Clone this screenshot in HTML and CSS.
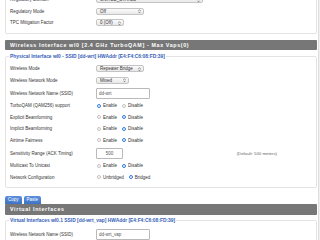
FILE: index.html
```html
<!DOCTYPE html>
<html lang="en">
<head>
    <meta charset="UTF-8">
    <title>Wireless Basic Settings</title>
    <link rel="stylesheet" href="styles.css">
</head>
<body>
    <div class="page">
        <!-- Regulatory settings (continues above the fold) -->
        <fieldset class="group first">
            <div class="row">
                <span class="label">Regulatory Domain</span>
                <span class="select wide">UNITED_STATES <svg class="arrows" viewBox="0 0 4 6"><path d="M0.6 2.4 2 0.9 3.4 2.4M0.6 3.6 2 5.1 3.4 3.6"/></svg></span>
            </div>
            <div class="row">
                <span class="label">Regulatory Mode</span>
                <span class="select" style="width:48px">Off <svg class="arrows" viewBox="0 0 4 6"><path d="M0.6 2.4 2 0.9 3.4 2.4M0.6 3.6 2 5.1 3.4 3.6"/></svg></span>
            </div>
            <div class="row">
                <span class="label">TPC Mitigation Factor</span>
                <span class="select" style="width:28px">0 (Off) <svg class="arrows" viewBox="0 0 4 6"><path d="M0.6 2.4 2 0.9 3.4 2.4M0.6 3.6 2 5.1 3.4 3.6"/></svg></span>
            </div>
        </fieldset>

        <h2 class="bar">Wireless Interface wl0 [2.4 GHz TurboQAM] - Max Vaps(0)</h2>

        <!-- Physical interface -->
        <fieldset class="group">
            <legend>Physical Interface wl0 - SSID [dd-wrt] HWAddr [E4:F4:C6:08:FD:39]</legend>
            <div class="row">
                <span class="label">Wireless Mode</span>
                <span class="select" style="width:48px">Repeater Bridge <svg class="arrows" viewBox="0 0 4 6"><path d="M0.6 2.4 2 0.9 3.4 2.4M0.6 3.6 2 5.1 3.4 3.6"/></svg></span>
            </div>
            <div class="row">
                <span class="label">Wireless Network Mode</span>
                <span class="select" style="width:33px">Mixed <svg class="arrows" viewBox="0 0 4 6"><path d="M0.6 2.4 2 0.9 3.4 2.4M0.6 3.6 2 5.1 3.4 3.6"/></svg></span>
            </div>
            <div class="row tall">
                <span class="label">Wireless Network Name (SSID)</span>
                <span class="text" style="width:54px">dd-wrt</span>
            </div>
            <div class="row">
                <span class="label">TurboQAM (QAM256) support</span>
                <span class="option"><i class="radio on"></i>Enable</span>
                <span class="option"><i class="radio"></i>Disable</span>
            </div>
            <div class="row">
                <span class="label">Explicit Beamforming</span>
                <span class="option"><i class="radio"></i>Enable</span>
                <span class="option"><i class="radio on"></i>Disable</span>
            </div>
            <div class="row">
                <span class="label">Implicit Beamforming</span>
                <span class="option"><i class="radio"></i>Enable</span>
                <span class="option"><i class="radio on"></i>Disable</span>
            </div>
            <div class="row">
                <span class="label">Airtime Fairness</span>
                <span class="option"><i class="radio"></i>Enable</span>
                <span class="option"><i class="radio on"></i>Disable</span>
            </div>
            <div class="row tall">
                <span class="label">Sensitivity Range (ACK Timing)</span>
                <span class="text num" style="width:27px">500</span>
                <span class="default">(Default: 500 meters)</span>
            </div>
            <div class="row">
                <span class="label">Multicast To Unicast</span>
                <span class="option"><i class="radio"></i>Enable</span>
                <span class="option"><i class="radio on"></i>Disable</span>
            </div>
            <div class="row">
                <span class="label">Network Configuration</span>
                <span class="option"><i class="radio"></i>Unbridged</span>
                <span class="option"><i class="radio on"></i>Bridged</span>
            </div>
        </fieldset>

        <!-- Copy / paste tabs -->
        <div class="tabs">
            <span class="tab">Copy</span>
            <span class="tab">Paste</span>
        </div>
        <h2 class="bar flat">Virtual Interfaces</h2>

        <!-- Virtual interface -->
        <fieldset class="group">
            <legend>Virtual Interfaces wl0.1 SSID [dd-wrt_vap] HWAddr [E4:F4:C6:08:FD:39]</legend>
            <div class="row tall">
                <span class="label">Wireless Network Name (SSID)</span>
                <span class="text" style="width:54px">dd-wrt_vap</span>
            </div>
        </fieldset>
    </div>
</body>
</html>
```

FILE: styles.css
```css
/* Page */
body {
    margin: 0;
    background: #f0f0f0;
    font-family: "Liberation Sans", Arial, sans-serif;
    font-size: 4.5px;
    color: #333;
    overflow: hidden;
}

.page {
    width: 312px;
    height: 240px;
    padding: 0 1px 0 5px;
    background: #fff;
    border-right: 1px solid #dedede;
    overflow: hidden;
}

/* Field groups */
.group {
    margin: 3.5px 0 0 0;
    padding: 0 4px 4px 4px;
    border: 1px solid #e3e3e3;
    border-radius: 2px;
    min-width: 0;
}

.group.first {
    margin-top: -11px;
    padding-top: 4px;
}

.group legend {
    padding: 0 1px;
    margin-left: -1px;
    font-weight: bold;
    font-size: 4.9px;
    line-height: 5.5px;
    color: #3560b8;
}

.group legend + .row {
    margin-top: 4px;
}

/* Section bars */
.bar {
    margin: 6px 0 0 0;
    height: 10.5px;
    display: flex;
    align-items: center;
    padding-left: 5px;
    background: #777;
    color: #fff;
    font-size: 5.3px;
    font-weight: bold;
    letter-spacing: 0.65px;
    border-radius: 1px;
}

.bar.flat {
    margin-top: 0;
    height: 11px;
}

/* Rows */
.row {
    display: flex;
    align-items: center;
    min-height: 11.5px;
}

.row.tall {
    min-height: 14px;
}

.label {
    width: 86px;
    flex: none;
}

/* Select lookalike */
.select {
    display: inline-flex;
    align-items: center;
    justify-content: space-between;
    box-sizing: border-box;
    height: 7px;
    padding: 0 2px 0 3px;
    border: 0.5px solid #c4c4c4;
    border-radius: 2px;
    background: linear-gradient(#fbfbfb, #e8e8e8);
    font-size: 4.5px;
    white-space: nowrap;
}

.select.wide {
    width: 107px;
}

.arrows {
    width: 3px;
    height: 4.5px;
    fill: none;
    stroke: #444;
    stroke-width: 0.8;
}

/* Text input lookalike */
.text {
    display: flex;
    align-items: center;
    box-sizing: border-box;
    height: 11px;
    padding-left: 2px;
    border: 0.5px solid #b9b9b9;
    border-radius: 1px;
    background: #fff;
    color: #555;
}

.text.num {
    justify-content: center;
    padding-left: 0;
}

.default {
    margin-left: auto;
    margin-right: 35px;
    color: #666;
    font-size: 4.3px;
}

/* Radios */
.option {
    display: inline-flex;
    align-items: center;
    margin-right: 4px;
}

.radio {
    box-sizing: border-box;
    width: 4px;
    height: 4px;
    margin: 0 2px 0 1px;
    border: 0.5px solid #c2c2c2;
    border-radius: 50%;
    background: #fff;
}

.radio.on {
    border-color: #2f7de1;
    background: radial-gradient(circle, #fff 0 0.7px, #2f7de1 0.9px);
}

/* Copy / Paste tabs */
.tabs {
    display: flex;
    gap: 2px;
    margin-top: 7.5px;
}

.tab {
    display: flex;
    align-items: center;
    height: 8px;
    padding: 0 3px;
    background: linear-gradient(#5b8fdc, #3f74c6);
    color: #fff;
    font-size: 4.5px;
    border-radius: 2px 2px 0 0;
}
```
